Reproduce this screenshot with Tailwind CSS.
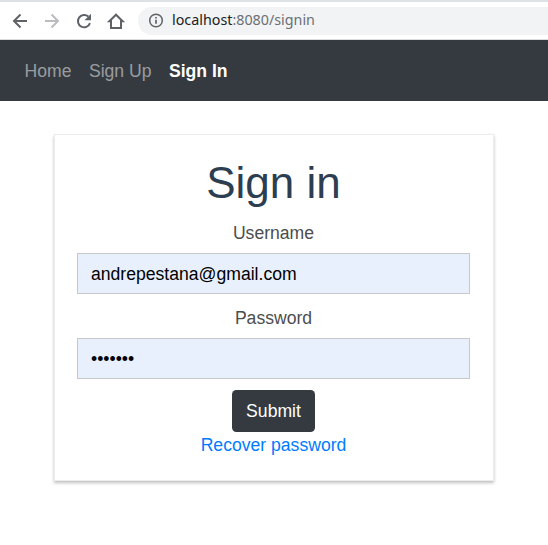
<!DOCTYPE html>
<html lang="en">
<head>
<meta charset="utf-8">
<title>Sign in</title>
<script src="https://cdn.jsdelivr.net/npm/@tailwindcss/browser@4"></script>
</head>
<body class="h-[545px] overflow-hidden bg-white font-['Liberation_Sans',sans-serif] text-[17.6px] leading-[26.4px]">
  <div class="flex h-10 items-center border-t-2 border-b border-t-[#dee1e6] border-b-[#dadce0] bg-white pl-[9px] text-[#5f6368]">
    <svg class="mr-[10px] size-[22px] shrink-0" viewBox="0 0 22 22" fill="none" stroke="currentColor" stroke-width="2"><path d="M18 11H5.500M11.500 4.500L5 11l6.500 6.500"/></svg>
    <svg class="mr-[10px] size-[22px] shrink-0 text-[#babcbe]" viewBox="0 0 22 22" fill="none" stroke="currentColor" stroke-width="2"><path d="M4 11h12.500M10.500 4.500L17 11l-6.500 6.500"/></svg>
    <svg class="mr-[10px] size-[22px] shrink-0" viewBox="0 0 22 22" fill="none" stroke="currentColor" stroke-width="2"><path d="M17 13.200A6.200 6.200 0 1 1 15.300 6.500"/><path d="M18 3.700v6.500h-6.500z" fill="currentColor" stroke="none"/></svg>
    <svg class="mr-[11px] size-[22px] shrink-0" viewBox="0 0 22 22" fill="none" stroke="currentColor" stroke-width="2"><path d="M4.500 11.300H6V18h10v-6.700h1.700L11 4.700 4.300 11.300z"/></svg>
    <div class="flex h-7 flex-1 items-center rounded-l-full bg-[#f1f3f4] pl-[10px]">
      <svg class="mr-2 size-4 shrink-0" viewBox="0 0 16 16" fill="none" stroke="currentColor" stroke-width="1.500"><circle cx="8" cy="7.500" r="6.300"/><path d="M8 6.700v4M8 4v1.600" stroke-width="1.700"/></svg>
      <div class="-mt-px font-['Noto_Sans',sans-serif] text-[14.3px] leading-5 text-[#6b6f74]"><span class="text-[#202124]">localhost</span>:8080/signin</div>
    </div>
  </div>
  <nav class="flex h-[61px] items-center gap-[17.4px] bg-[#343a40] pt-[2px] pl-[24.6px] text-white/50">
    <a>Home</a><a>Sign Up</a><a class="font-bold text-white">Sign In</a>
  </nav>
  <main class="mx-auto mt-[33px] flex h-[347px] w-[440px] flex-col items-center border border-[#ececec] pt-[21px] pr-[23px] pl-[22px] text-[#4d4d4d] shadow-[0_2px_3px_rgba(0,0,0,0.25)]">
    <h1 class="h-[53px] text-[44px] leading-[53px] text-[#2c3e50]">Sign in</h1>
    <label class="mt-[11px] h-[26px]">Username</label>
    <div class="mt-[7px] flex h-[41px] w-[393px] items-center border border-[#c8c8c8] bg-[#e8f0fe] pt-[2px] pl-[13px] text-black">andrepestana@gmail.com</div>
    <label class="mt-[11px] h-[26px]">Password</label>
    <div class="mt-[7px] flex h-[41px] w-[393px] items-center border border-[#c8c8c8] bg-[#e8f0fe] pt-[2px] pl-[13px] text-black">•••••••</div>
    <button class="mt-[11px] h-[42px] w-[83px] rounded-[4.4px] bg-[#343a40] text-white">Submit</button>
    <a class="text-[#007bff]">Recover password</a>
  </main>
</body>
</html>
